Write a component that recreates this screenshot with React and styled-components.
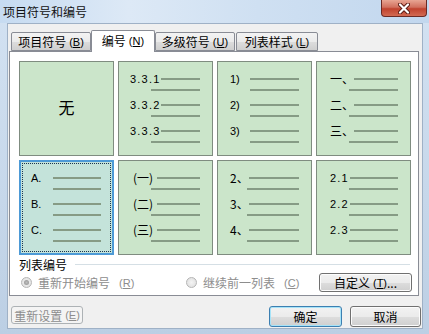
import React from 'react';
import styled, { createGlobalStyle } from 'styled-components';

const GlobalStyle = createGlobalStyle`
  html, body { margin: 0; padding: 0; }
  body {
    font-family: "Noto Sans CJK SC", "Liberation Sans", sans-serif;
    font-size: 12px;
    color: #000;
  }
`;

const Window = styled.div`
  width: 429px;
  height: 334px;
  box-sizing: border-box;
  display: flex;
  flex-direction: column;
  background: linear-gradient(to bottom, #d3e2f2, #c6d7ea 60%, #bccfe4);
  padding: 0 6px 5px 7px;
  overflow: hidden;
`;

const TitleBar = styled.div`
  height: 23px;
  display: flex;
  align-items: flex-start;
  justify-content: space-between;
  margin: 0 -6px 0 -7px;
  background: linear-gradient(to right, #c6dbf1, #dde9f6 30%, #cfe0f2 60%, #c2d7ee);
`;

const Title = styled.div`
  padding: 4px 0 0 3px;
  line-height: 16px;
  font-size: 12px;
  color: #111;
`;

const CloseButton = styled.div`
  width: 46px;
  height: 17px;
  margin-right: 2px;
  box-sizing: border-box;
  border: 1px solid #6b2a24;
  border-top: none;
  border-radius: 0 0 4px 4px;
  background: linear-gradient(to bottom, #e8a593, #d1705e 45%, #c0422e 55%, #d26a52);
  display: flex;
  align-items: center;
  justify-content: center;
  svg { display: block; }
`;

const Client = styled.div`
  flex: 1;
  background: #f0f0f0;
  border: 1px solid #9fb1c6;
  display: flex;
  flex-direction: column;
`;

const TabBar = styled.div`
  display: flex;
  align-items: flex-end;
  height: 21px;
  padding: 6px 0 0 3px;
  position: relative;
  z-index: 1;
`;

const Tab = styled.div`
  width: ${p => p.$w}px;
  height: ${p => (p.$active ? 22 : 19)}px;
  margin-left: ${p => p.$gap || 0}px;
  margin-bottom: ${p => (p.$active ? -1 : 0)}px;
  box-sizing: border-box;
  border: 1px solid #898c95;
  border-bottom: ${p => (p.$active ? 'none' : '1px solid #898c95')};
  border-radius: 2px 2px 0 0;
  background: ${p => (p.$active ? '#fff' : 'linear-gradient(to bottom, #f3f3f3, #ebebeb 50%, #dddddd 51%, #cfcfcf)')};
  display: flex;
  align-items: center;
  justify-content: center;
  padding-bottom: ${p => (p.$active ? 2 : 0)}px;
  white-space: nowrap;
`;

const Key = styled.span`
  font-family: "Liberation Sans", sans-serif;
  font-size: 11px;
  margin-left: 3px;
  u { text-decoration: underline; }
`;

const Panel = styled.div`
  margin: 0 3px 0 1px;
  height: 245px;
  box-sizing: border-box;
  background: #fff;
  border: 1px solid #898c95;
  padding: 9px 6px 0 9px;
  display: flex;
  flex-direction: column;
`;

const Grid = styled.div`
  display: grid;
  grid-template-columns: repeat(4, 95px);
  grid-template-rows: repeat(2, 95px);
  gap: 4px;
`;

const Cell = styled.div`
  box-sizing: border-box;
  border: ${p => (p.$selected ? '2px solid #4d9ad6' : '1px solid #7f8c80')};
  background: ${p => (p.$selected ? '#c4e3da' : '#cbe5ca')};
  padding: ${p => (p.$selected ? '9px 11px 0 10px' : '10px 12px 0 11px')};
  position: relative;
  display: flex;
  flex-direction: column;
  ${p => p.$center && 'align-items: center; justify-content: center; padding: 0;'}
  ${p => p.$selected && `
    &::after {
      content: "";
      position: absolute;
      inset: 1px;
      border: 1px dotted #1a3550;
      pointer-events: none;
    }
  `}
`;

const NoneLabel = styled.div`
  font-size: 16px;
  margin-top: -4px;
`;

const Item = styled.div`
  height: 26px;
  display: flex;
  flex-direction: column;
  align-items: flex-end;
`;

const Row = styled.div`
  height: 14px;
  width: 100%;
  display: flex;
  align-items: center;
`;

const Label = styled.div`
  width: ${p => p.$w}px;
  padding-left: ${p => p.$pad || 0}px;
  box-sizing: border-box;
  font-family: ${p => (p.$cjk ? '"Noto Sans CJK SC", sans-serif' : '"Liberation Sans", sans-serif')};
  font-size: ${p => (p.$cjk ? 12 : 11)}px;
  letter-spacing: ${p => p.$ls || 0}px;
  white-space: nowrap;
  line-height: 14px;
`;

const Line = styled.div`
  height: 2px;
  background: #869b85;
  width: ${p => p.$w}px;
  margin-left: auto;
  margin-top: ${p => p.$top || 0}px;
`;

const SectionHead = styled.div`
  display: flex;
  align-items: center;
  height: 14px;
  margin-top: 2px;
  gap: 8px;
`;

const Separator = styled.div`
  flex: 1;
  height: 1px;
  background: #d5dfe5;
  margin-right: 2px;
`;

const OptionRow = styled.div`
  display: flex;
  align-items: center;
  height: 19px;
  margin-top: 2px;
  padding-left: 2px;
`;

const RadioLabel = styled.label`
  display: flex;
  align-items: center;
  color: #8d8d8d;
  gap: 6px;
  width: ${p => p.$w}px;
`;

const Radio = styled.span`
  width: 11px;
  height: 11px;
  border-radius: 50%;
  box-sizing: border-box;
  border: 1px solid #b5b5b5;
  background: radial-gradient(circle, #f4f4f4, #dcdcdc);
  display: flex;
  align-items: center;
  justify-content: center;
  &::after {
    content: "";
    width: 5px;
    height: 5px;
    border-radius: 50%;
    background: ${p => (p.$checked ? 'radial-gradient(circle, #bdbdbd, #8f8f8f)' : 'transparent')};
  }
`;

const Button = styled.div`
  width: ${p => p.$w}px;
  height: ${p => p.$h || 20}px;
  box-sizing: border-box;
  border-radius: 3px;
  border: 1px solid ${p => (p.$default ? '#3c7fb1' : p.$disabled ? '#adb2b5' : '#707070')};
  background: ${p => (p.$disabled
    ? '#f4f4f4'
    : 'linear-gradient(to bottom, #f2f2f2, #ebebeb 50%, #dddddd 51%, #cfcfcf)')};
  box-shadow: ${p => (p.$default ? 'inset 0 0 0 1px #a6e3f8' : p.$disabled ? 'none' : 'inset 0 0 0 1px #fcfcfc')};
  color: ${p => (p.$disabled ? '#8d8d8d' : '#000')};
  display: flex;
  align-items: center;
  justify-content: center;
  white-space: nowrap;
  margin-left: ${p => (p.$auto ? 'auto' : `${p.$ml || 0}px`)};
`;

const Footer = styled.div`
  display: flex;
  align-items: flex-start;
  margin-top: 10px;
  padding: 0 1px 0 3px;
`;

const Mark = ({ k }) => (
  <Key>(<u>{k}</u>)</Key>
);

const items = [
  { type: 'none' },
  { labels: ['3.3.1', '3.3.2', '3.3.3'], lw: 32, ls: 1.2, first: 40, second: 49 },
  { labels: ['1)', '2)', '3)'], lw: 21, pad: 1, first: 49, second: 49 },
  { labels: ['一、', '二、', '三、'], lw: 26, cjk: true, pad: 2, first: 44, second: 49 },
  { labels: ['A.', 'B.', 'C.'], lw: 22, selected: true, first: 48, second: 48 },
  { labels: ['(一)', '(二)', '(三)'], lw: 26, cjk: true, pad: 3, first: 43, second: 49 },
  { labels: ['2、', '3、', '4、'], lw: 20, cjk: true, pad: 1, first: 50, second: 52 },
  { labels: ['2.1', '2.2', '2.3'], lw: 22, ls: 1.2, pad: 2, first: 49, second: 49 },
];

const ListCell = ({ data }) => (
  <Cell $selected={data.selected}>
    {data.labels.map(l => (
      <Item key={l}>
        <Row>
          <Label $w={data.lw} $cjk={data.cjk} $pad={data.pad} $ls={data.ls}>{l}</Label>
          <Line $w={data.first} />
        </Row>
        <Line $w={data.second} $top={3} />
      </Item>
    ))}
  </Cell>
);

export default function App() {
  return (
    <>
      <GlobalStyle />
      <Window>
        <TitleBar>
          <Title>项目符号和编号</Title>
          <CloseButton>
            <svg width="12" height="11" viewBox="0 0 12 11">
              <path d="M2 1.5 L10 9.5 M10 1.5 L2 9.5" stroke="#5a1a12" strokeWidth="4" strokeLinecap="round" />
              <path d="M2 1.5 L10 9.5 M10 1.5 L2 9.5" stroke="#fff" strokeWidth="2.2" strokeLinecap="round" />
            </svg>
          </CloseButton>
        </TitleBar>
        <Client>
          <TabBar>
            <Tab $w={80}>项目符号<Mark k="B" /></Tab>
            <Tab $w={64} $active>编号<Mark k="N" /></Tab>
            <Tab $w={80}>多级符号<Mark k="U" /></Tab>
            <Tab $w={82} $gap={1}>列表样式<Mark k="L" /></Tab>
          </TabBar>
          <Panel>
            <Grid>
              {items.map((it, i) =>
                it.type === 'none' ? (
                  <Cell key={i} $center><NoneLabel>无</NoneLabel></Cell>
                ) : (
                  <ListCell key={i} data={it} />
                )
              )}
            </Grid>
            <SectionHead>
              <span>列表编号</span>
              <Separator />
            </SectionHead>
            <OptionRow>
              <RadioLabel $w={165}><Radio $checked />重新开始编号<Mark k="R" /></RadioLabel>
              <RadioLabel $w={120}><Radio />继续前一列表<Mark k="C" /></RadioLabel>
              <Button $w={93} $h={19} $auto>自定义<Mark k="T" />...</Button>
            </OptionRow>
          </Panel>
          <Footer>
            <Button $w={72} $h={18} $disabled>重新设置<Mark k="E" /></Button>
            <Button $w={73} $h={21} $default $auto>确定</Button>
            <Button $w={71} $h={21} $ml={8}>取消</Button>
          </Footer>
        </Client>
      </Window>
    </>
  );
}
